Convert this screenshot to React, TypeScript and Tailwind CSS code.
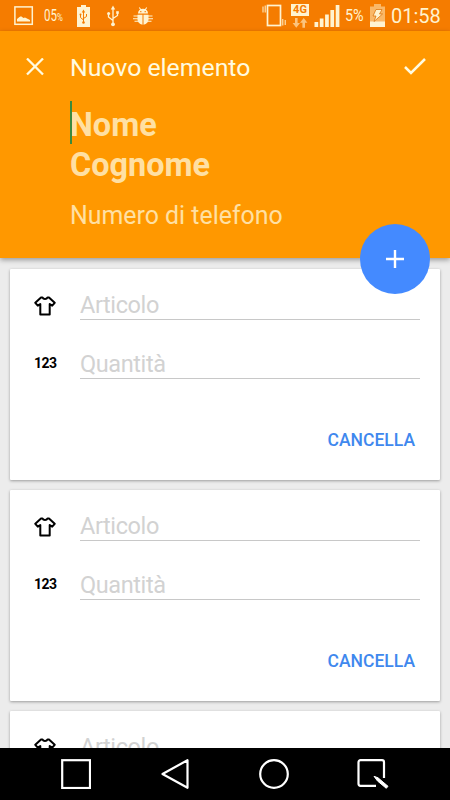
import React from 'react';

const items = [1, 2, 3];

const ShirtIcon: React.FC = () => (
  <svg className="w-[22px] h-5 mt-[7px] shrink-0" fill="none" stroke="#000" strokeWidth={2} strokeLinejoin="round" viewBox="0 0 22 20">
    <path d="M7 1.500 1.300 6.800l2.500 2.900L6.300 8v10.500h9.400V8l2.500 1.700 2.500-2.900L15 1.500h-1.500C13 2.600 12 3 11 3s-2-.4-2.500-1.500z" />
  </svg>
);

const StatusBar: React.FC = () => (
  <div className="flex items-center h-[31px] shrink-0 bg-[#f57c00] text-[#fff3d0] fill-current">
    {/* notifiche */}
    <svg className="w-5 h-5 ml-[14px]" viewBox="0 0 20 20">
      <rect x="0.900" y="0.900" width="17.400" height="17.400" fill="none" stroke="currentColor" strokeWidth="1.500" />
      <path d="M3 15.500v-2.500l2.500-2 1.500-.8 2.500 1.800 1.500-.5 5 2.500v1.500z" />
    </svg>
    <span className="ml-[10px] w-[20px] inline-block whitespace-nowrap text-[16px] leading-none">
      <span className="inline-block origin-left scale-x-[.72]">
        05<span className="text-[11px]">%</span>
      </span>
    </span>
    <svg className="w-[13px] h-[22px] ml-[13px]" viewBox="0 0 13 22">
      <path d="M4 0h5v2h4v20H0V2h4z" />
      <g fill="none" stroke="#f57c00" strokeWidth="1">
        <path d="M6.500 6v12M3.500 9.500v3l3 2.500M9.500 9v2.500l-3 2" />
      </g>
      <path d="M6.500 4.500 8.200 7.500H4.800z" fill="#f57c00" />
      <circle cx="6.500" cy="17.500" r="1.300" fill="#f57c00" />
      <circle cx="3.500" cy="9.500" r="1" fill="#f57c00" />
    </svg>
    <svg className="w-3 h-[22px] ml-[17px]" viewBox="0 0 12 22">
      <path d="M6 3v16M1.500 8.500v3.500L6 15.500M10.500 7.500v3L6 13.500" fill="none" stroke="currentColor" strokeWidth="1.300" />
      <path d="M6 .5 8.200 4.500H3.800z" />
      <circle cx="6" cy="19.300" r="1.900" />
      <circle cx="1.600" cy="8.500" r="1.500" />
      <path d="M9.200 6.200h2.600v2.600H9.200z" />
    </svg>
    <svg className="w-5 h-[18px] ml-[14px]" viewBox="0 0 20 18">
      <path d="M5 6.500a5 4.800 0 0 1 10 0z" />
      <path d="M4.500 7.800h5v9.900Q4.500 16.500 4.500 12.500zM10.500 7.800h5v4.700q0 4-5 5.200z" />
      <path d="M6.300.5 8 3M13.700.5 12 3M5 9H.5M5 11.700H0M5.500 14.300H1.500M15 9h4.500M15 11.700h5M14.500 14.300h4" stroke="currentColor" strokeWidth="1.100" />
      <path d="M7.200 4h1.200v1.200H7.200zM11.600 4h1.200v1.200h-1.200z" fill="#f57c00" />
    </svg>

    {/* stato del telefono */}
    <svg className="w-6 h-[23px] ml-auto" viewBox="0 0 24 23">
      <rect x="5.500" y="1.500" width="13" height="20" fill="none" stroke="currentColor" strokeWidth="1.700" />
      <path d="M1 2.500v6M3.200 1.500v7M20.800 15v6.500M23.200 16v5" stroke="currentColor" strokeWidth="1" />
    </svg>
    <div className="ml-[5px] w-[18px] h-[24px] flex flex-col items-center">
      <span className="w-[18px] h-[12px] bg-[#fff3d0] text-[#f57c00] text-[11px] font-bold leading-[12px] text-center">4G</span>
      <svg className="w-4 h-[10px] mt-[2px] opacity-60" viewBox="0 0 16 10">
        <path d="M3 0h2.600v5h2.400L4.300 9.800.6 5H3zM10.400 9.800H13v-5h2.400L11.700 0 8 4.800h2.400z" />
      </svg>
    </div>
    <svg className="w-[26px] h-6 ml-[5px]" viewBox="0 0 26 24">
      <path d="M.5 18h3.700v5H.5zM5.800 14.500h3.700V23H5.800zM11.100 10.500h3.700V23h-3.700zM16.400 6h3.700v17h-3.700zM21.700 1h3.700v22h-3.700z" />
    </svg>
    <span className="ml-[5px] w-[20px] text-[16px] leading-none whitespace-nowrap">
      <span className="inline-block origin-left scale-x-[.9]">5%</span>
    </span>
    <svg className="w-[15px] h-[23px] ml-[5px]" viewBox="0 0 15 23">
      <path d="M4 0h7v2.500h4V23H0V2.500h4z" opacity=".5" />
      <path d="M0 17.500h15V23H0z" />
      <path d="M6 5.500h6l-2.500 4.500h3L4 17.500l2-5.500H3z" stroke="#d96c00" strokeWidth=".7" />
    </svg>
    <span className="ml-[6px] mr-[9px] w-[50px] text-[20px] leading-none whitespace-nowrap">01:58</span>
  </div>
);

const ItemCard: React.FC = () => (
  <div className="h-[211px] shrink-0 bg-white rounded-[1px] shadow-[0_1px_3px_rgba(0,0,0,0.35)] pl-6 pr-5 pt-4">
    <div className="flex items-center">
      <ShirtIcon />
      <div className="ml-6 flex-1 h-[35px] border-b border-[#c8c8c8] text-[23.500px] tracking-[-0.400px] leading-[41px] text-[#d2d2d2]">
        Articolo
      </div>
    </div>
    <div className="flex items-center mt-6">
      <span className="w-[22px] mt-[3px] text-[14px] font-bold leading-none tracking-[-0.500px] text-black">123</span>
      <div className="ml-6 flex-1 h-[35px] border-b border-[#c8c8c8] text-[23.500px] tracking-[-0.400px] leading-[41px] text-[#d2d2d2]">
        Quantità
      </div>
    </div>
    <div className="flex justify-end mt-[49px] pr-[5px]">
      <button className="text-[17.500px] font-medium leading-6 text-[#3f88ee]">CANCELLA</button>
    </div>
  </div>
);

const NavBar: React.FC = () => (
  <div className="h-[52px] shrink-0 bg-black flex items-center pl-[61px] gap-[70px]">
    <svg className="w-[30px] h-[30px]" fill="none" stroke="#fff" strokeWidth={2.2} viewBox="0 0 30 30">
      <rect x="1.200" y="1.200" width="27.800" height="27.800" />
    </svg>
    <svg className="w-[28px] h-[30px]" fill="none" stroke="#fff" strokeWidth={2.2} strokeLinejoin="round" viewBox="0 0 28 30">
      <path d="M26.500 1.200v27.600L1.500 15z" />
    </svg>
    <svg className="w-[30px] h-[30px]" fill="none" stroke="#fff" strokeWidth={2.2} viewBox="0 0 30 30">
      <circle cx="15" cy="15" r="13.800" />
    </svg>
    <svg className="w-8 h-[30px] -ml-[2px]" fill="none" stroke="#fff" strokeWidth={2.2} viewBox="0 0 32 30">
      <path d="M19 26.800H3.500a2 2 0 0 1-2-2V3.200a2 2 0 0 1 2-2h21.500a2 2 0 0 1 2 2V19" />
      <path d="M17 17.300 21 18.800 31 27.300 29.300 29.300 20.500 22z" fill="#fff" strokeWidth={1} strokeLinejoin="round" />
    </svg>
  </div>
);

const App: React.FC = () => {
  return (
    <div className="w-[450px] h-[800px] flex flex-col overflow-hidden bg-[#ececec] font-['Roboto',sans-serif]">
      <StatusBar />

      {/* intestazione */}
      <div className="relative z-10 h-[227px] shrink-0 bg-[#ff9800] shadow-[0_2px_5px_rgba(0,0,0,0.35)]">
        <div className="flex items-center h-[72px] pl-[26px] pr-6">
          <svg className="w-[18px] h-[18px]" stroke="#fffbe0" strokeWidth={2.3} viewBox="0 0 18 18">
            <path d="M1 .5l16 16M17 .5l-16 16" />
          </svg>
          <h1 className="ml-[26px] mt-[2px] text-[24.800px] leading-none text-[#fffbe0]">Nuovo elemento</h1>
          <svg className="w-[22px] h-[18px] ml-auto" fill="none" stroke="#fffbe0" strokeWidth={2.5} viewBox="0 0 22 18">
            <path d="M1 9l6 6L21 1" />
          </svg>
        </div>
        <div className="pl-[70px] text-[#ffe0a3]">
          <div className="relative pt-[2px] text-[32.400px] font-bold leading-[40px]">
            <span className="absolute left-0 -top-[2px] w-[2px] h-[43px] bg-[#3b8a3e]" />
            <div>Nome</div>
            <div>Cognome</div>
          </div>
          <div className="mt-[16px] text-[24.900px] leading-[30px]">Numero di telefono</div>
        </div>
        <button className="absolute right-5 -bottom-[35.500px] w-[70px] h-[70px] rounded-full bg-[#448aff] flex items-center justify-center">
          <svg className="w-[18px] h-[18px]" stroke="#fff" strokeWidth={2.4} viewBox="0 0 18 18">
            <path d="M9 0v18M0 9h18" />
          </svg>
        </button>
      </div>

      {/* elenco articoli */}
      <div className="flex-1 min-h-0 overflow-hidden flex flex-col gap-[10px] px-[10px] pt-[11px]">
        {items.map((id) => (
          <ItemCard key={id} />
        ))}
      </div>

      <NavBar />
    </div>
  );
};

export default App;
